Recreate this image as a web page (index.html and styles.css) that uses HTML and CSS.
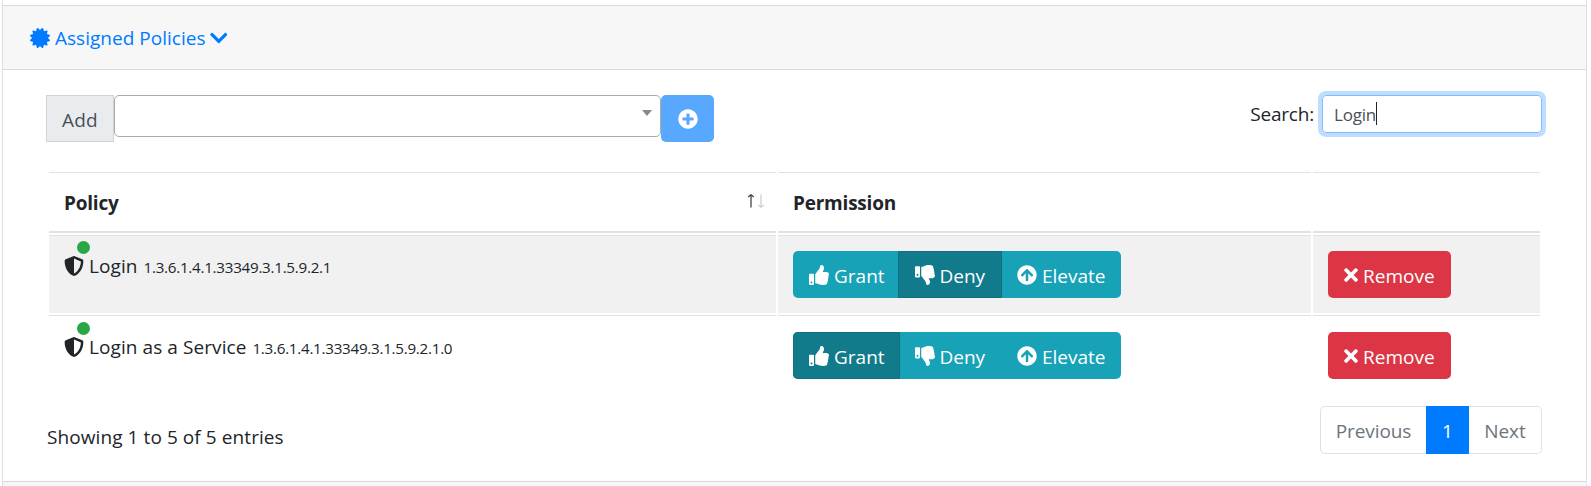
FILE: index.html
```html
<!DOCTYPE html>
<html lang="en">
<head>
<meta charset="utf-8">
<title>Assigned Policies</title>
<link rel="stylesheet" href="styles.css">
</head>
<body>
<svg class="sprite" aria-hidden="true">
  <symbol id="shield" viewBox="0 0 512 512"><path d="M466.5 83.7l-192-80a48.15 48.15 0 0 0-36.9 0l-192 80C27.7 91.1 16 108.6 16 128c0 198.5 114.5 335.7 221.5 380.3 11.8 4.9 25.1 4.9 36.9 0C360.1 472.6 496 349.3 496 128c0-19.4-11.7-36.9-29.5-44.3zM256.1 446.3l-.1-381 175.9 73.3c-3.3 151.4-82.1 261.1-175.8 307.7z"/></symbol>
  <symbol id="times" viewBox="0 0 352 512"><path d="M242.72 256l100.07-100.07c12.28-12.28 12.28-32.19 0-44.48l-22.24-22.24c-12.28-12.28-32.19-12.28-44.48 0L176 189.28 75.93 89.21c-12.28-12.28-32.19-12.28-44.48 0L9.21 111.45c-12.28 12.28-12.28 32.19 0 44.48L109.28 256 9.21 356.07c-12.28 12.28-12.28 32.19 0 44.48l22.24 22.24c12.28 12.28 32.2 12.28 44.48 0L176 322.72l100.07 100.07c12.28 12.28 32.2 12.28 44.48 0l22.24-22.24c12.28-12.28 12.28-32.19 0-44.48L242.72 256z"/></symbol>
  <symbol id="thumbs-up" viewBox="0 0 512 512"><path d="M104 224H24c-13.255 0-24 10.745-24 24v240c0 13.255 10.745 24 24 24h80c13.255 0 24-10.745 24-24V248c0-13.255-10.745-24-24-24zM64 472c-13.255 0-24-10.745-24-24s10.745-24 24-24 24 10.745 24 24-10.745 24-24 24zM384 81.452c0 42.416-25.97 66.208-33.277 94.548h101.723c33.397 0 59.397 27.746 59.553 58.098.084 17.938-7.546 37.249-19.439 49.197l-.11.11c9.836 23.337 8.237 56.037-9.308 79.469 8.681 25.895-.069 57.704-16.382 74.757 4.298 17.598 2.244 32.575-6.148 44.632C440.202 511.587 389.616 512 346.839 512l-2.845-.001c-48.287-.017-87.806-17.598-119.56-31.725-15.957-7.099-36.821-15.887-52.651-16.178-6.54-.12-11.783-5.457-11.783-11.998v-213.77c0-3.2 1.282-6.271 3.558-8.521 39.614-39.144 56.648-80.587 89.117-113.111 14.804-14.832 20.188-37.236 25.393-58.902C282.515 39.293 291.817 0 312 0c24 0 72 8 72 81.452z"/></symbol>
  <symbol id="thumbs-down" viewBox="0 0 512 512"><path d="M0 56v240c0 13.255 10.745 24 24 24h80c13.255 0 24-10.745 24-24V56c0-13.255-10.745-24-24-24H24C10.745 32 0 42.745 0 56zm40 200c0-13.255 10.745-24 24-24s24 10.745 24 24-10.745 24-24 24-24-10.745-24-24zm272 256c-20.183 0-29.485-39.293-33.931-57.795-5.206-21.666-10.589-44.07-25.393-58.902-32.469-32.524-49.503-73.967-89.117-113.111a11.98 11.98 0 0 1-3.558-8.521V59.901c0-6.541 5.243-11.878 11.783-11.998 15.831-.29 36.694-9.079 52.651-16.178C256.189 17.598 295.709.017 343.995 0h2.844c42.777 0 93.363.413 113.774 29.737 8.392 12.057 10.446 27.034 6.148 44.632 16.312 17.053 25.063 48.863 16.382 74.757 17.544 23.432 19.143 56.132 9.308 79.469l.11.11c11.893 11.949 19.523 31.259 19.439 49.197-.156 30.352-26.157 58.098-59.553 58.098H350.723C358.03 364.34 384 388.132 384 430.548 384 504 336 512 312 512z"/></symbol>
  <symbol id="arrow-up" viewBox="0 0 512 512"><path d="M8 256C8 119 119 8 256 8s248 111 248 248-111 248-248 248S8 393 8 256zm143.6 28.9l72.4-75.5V392c0 13.3 10.7 24 24 24h16c13.3 0 24-10.7 24-24V209.4l72.4 75.5c9.3 9.7 24.8 9.9 34.3.4l10.9-11c9.4-9.4 9.4-24.6 0-33.9L273 107.7c-9.4-9.4-24.6-9.4-33.9 0L106.3 240.4c-9.4 9.4-9.4 24.6 0 33.9l10.9 11c9.6 9.5 25.1 9.3 34.4-.4z"/></symbol>
  <symbol id="plus" viewBox="0 0 512 512"><path d="M256 8C119 8 8 119 8 256s111 248 248 248 248-111 248-248S393 8 256 8zm144 276c0 6.6-5.4 12-12 12h-92v92c0 6.6-5.4 12-12 12h-56c-6.6 0-12-5.4-12-12v-92h-92c-6.6 0-12-5.4-12-12v-56c0-6.6 5.4-12 12-12h92v-92c0-6.6 5.4-12 12-12h56c6.6 0 12 5.4 12 12v92h92c6.6 0 12 5.4 12 12v56z"/></symbol>
  <symbol id="chevron" viewBox="0 0 448 512"><path d="M207.029 381.476L12.686 187.132c-9.373-9.373-9.373-24.569 0-33.941l22.667-22.667c9.357-9.357 24.522-9.375 33.901-.04L224 284.505l154.745-154.021c9.379-9.335 24.544-9.317 33.901.04l22.667 22.667c9.373 9.373 9.373 24.569 0 33.941L240.971 381.476c-9.373 9.372-24.569 9.372-33.942 0z"/></symbol>
  <symbol id="certificate" viewBox="0 0 512 512"><path d="M458.622 255.92l45.985-45.005c13.708-12.977 7.316-36.039-10.664-40.339l-62.65-15.99 17.661-62.015c4.991-17.838-11.829-34.663-29.661-29.671l-61.994 17.667-15.984-62.671C337.085.197 313.765-6.276 300.99 7.228L256 53.57 211.011 7.229c-12.63-13.351-36.047-7.234-40.325 10.668l-15.984 62.671-61.995-17.667C74.87 57.907 58.056 74.738 63.046 92.572l17.661 62.015-62.65 15.99C.069 174.878-6.31 197.944 7.392 210.915l45.985 45.005-45.985 45.004c-13.708 12.977-7.316 36.039 10.664 40.339l62.65 15.99-17.661 62.015c-4.991 17.838 11.829 34.663 29.661 29.671l61.994-17.667 15.984 62.671c4.439 18.575 27.696 24.018 40.325 10.668L256 458.61l44.989 46.001c12.5 13.488 35.987 7.486 40.325-10.668l15.984-62.671 61.994 17.667c17.836 4.994 34.651-11.837 29.661-29.671l-17.661-62.015 62.65-15.99c17.987-4.302 24.366-27.367 10.664-40.339l-45.984-45.004z"/></symbol>
</svg>
<main class="accordion">
  <section class="card">
    <header class="card-header">
      <svg class="icon"><use href="#certificate"/></svg>
      <a class="card-title">Assigned Policies</a>
      <svg class="icon icon-chevron"><use href="#chevron"/></svg>
    </header>
    <div class="card-body">
      <div class="toolbar">
        <div class="input-group">
          <span class="group-label">Add</span>
          <div class="select"><svg class="caret" viewBox="0 0 10 6"><path d="M0 0h10L5 6z"/></svg></div>
          <button class="btn btn-add"><svg class="icon"><use href="#plus"/></svg></button>
        </div>
        <label class="search">Search: <span class="search-box"><span class="search-text">Login</span><span class="cursor"></span></span></label>
      </div>
      <table class="table">
        <colgroup><col class="col-policy"><col class="col-permission"><col class="col-action"></colgroup>
        <thead>
          <tr>
            <th><div class="sortable">Policy
              <svg class="sort" viewBox="0 0 18 14"><path class="sort-on" d="M4 13.5V1M1.200 3L4 .8l2.800 2.200"/><path class="sort-off" d="M14 0.500V13M11.200 11L14 13.200l2.800-2.200"/></svg></div></th>
            <th>Permission</th>
            <th></th>
          </tr>
        </thead>
        <tbody>
          <tr class="odd">
            <td><div class="policy"><span class="badge-icon"><svg class="icon"><use href="#shield"/></svg><i class="dot"></i></span><span class="name">Login</span><small>1.3.6.1.4.1.33349.3.1.5.9.2.1</small></div></td>
            <td><div class="btn-group">
              <button class="btn btn-info grant"><svg class="icon"><use href="#thumbs-up"/></svg><span>Grant</span></button><button class="btn btn-info deny active"><svg class="icon"><use href="#thumbs-down"/></svg><span>Deny</span></button><button class="btn btn-info elevate"><svg class="icon"><use href="#arrow-up"/></svg><span>Elevate</span></button>
            </div></td>
            <td><button class="btn btn-danger"><svg class="icon icon-times"><use href="#times"/></svg><span>Remove</span></button></td>
          </tr>
          <tr class="even">
            <td><div class="policy"><span class="badge-icon"><svg class="icon"><use href="#shield"/></svg><i class="dot"></i></span><span class="name">Login as a Service</span><small>1.3.6.1.4.1.33349.3.1.5.9.2.1.0</small></div></td>
            <td><div class="btn-group">
              <button class="btn btn-info grant active"><svg class="icon"><use href="#thumbs-up"/></svg><span>Grant</span></button><button class="btn btn-info deny"><svg class="icon"><use href="#thumbs-down"/></svg><span>Deny</span></button><button class="btn btn-info elevate"><svg class="icon"><use href="#arrow-up"/></svg><span>Elevate</span></button>
            </div></td>
            <td><button class="btn btn-danger"><svg class="icon icon-times"><use href="#times"/></svg><span>Remove</span></button></td>
          </tr>
        </tbody>
      </table>
      <div class="table-footer">
        <div class="info">Showing 1 to 5 of 5 entries</div>
        <nav class="pagination"><span class="page prev">Previous</span><span class="page current">1</span><span class="page next">Next</span></nav>
      </div>
    </div>
  </section>
  <section class="card card-next"></section>
</main>
</body>
</html>
```
FILE: styles.css
```css
* { box-sizing: border-box; }

body {
  margin: 0;
  height: 486px;
  overflow: hidden;
  background: #fff;
  color: #212529;
  font-family: "Open Sans", "Noto Sans", sans-serif;
  font-size: 19px;
  line-height: 30px;
}

.sprite { display: none; }

.icon {
  display: block;
  flex: none;
  width: 20px;
  height: 20px;
  fill: currentColor;
}

.accordion {
  margin: 0 4px 0 2px;
  height: 486px;
  border: solid #dfdfdf;
  border-width: 0 1px;
}

.card { padding-top: 5px; }

.card-header {
  display: flex;
  align-items: center;
  height: 65px;
  padding: 0 26px 0 26.500px;
  border: solid #d9d9d9;
  border-width: 1px 0;
  background: #f7f7f7;
  color: #007bff;
}

.card-title {
  margin: 0 4px 0 5.500px;
  letter-spacing: 0.020px;
}

.icon-chevron { width: 17.500px; }

.card-body {
  height: 411px;
  padding: 25px 44px 0 43px;
}

.toolbar {
  display: flex;
  justify-content: space-between;
  align-items: flex-start;
  height: 77px;
}

.input-group {
  display: flex;
  align-items: flex-start;
}

.group-label {
  width: 68px;
  height: 47px;
  padding-top: 10px;
  border: 1px solid #ced4da;
  background: #e9ecef;
  color: #495057;
  line-height: 29px;
  letter-spacing: 0.200px;
  text-align: center;
}

.select {
  display: flex;
  justify-content: flex-end;
  width: 547px;
  height: 42px;
  padding: 14px 8px 0 0;
  border: 1px solid #aaa;
  border-radius: 5px;
}

.caret {
  width: 10px;
  height: 6px;
  fill: #888;
}

.btn {
  display: flex;
  align-items: center;
  height: 47px;
  padding: 1px 0 0 16px;
  border: 0;
  border-radius: 5px;
  color: #fff;
  font: inherit;
}

.btn span { padding-top: 2px; }

.btn-add {
  width: 53px;
  padding: 0 0 0 16.500px;
  background: #59a8ff;
}

.search {
  display: flex;
  align-items: center;
  height: 38px;
  letter-spacing: -0.200px;
}

.search-box {
  display: flex;
  align-items: center;
  width: 220px;
  height: 38px;
  margin-left: 8px;
  padding: 2px 0 0 11px;
  border: 1px solid #80bdff;
  border-radius: 4px;
  box-shadow: 0 0 0 4px #bfdeff;
  color: #495057;
  font-size: 17px;
}

.cursor {
  width: 1px;
  height: 23px;
  margin-top: -3px;
  background: #212529;
}

.table {
  width: 1495px;
  margin: -2px 0 0 1px;
  border-collapse: separate;
  border-spacing: 2px;
  table-layout: fixed;
}

.col-policy { width: 727px; }
.col-permission { width: 533px; }
.col-action { width: 227px; }

th, td {
  padding: 15px;
  border-top: 1px solid #dee2e6;
  text-align: left;
  vertical-align: top;
}

th {
  height: 61px;
  padding: 15px 15px 0;
  border-bottom: 2px solid #dee2e6;
  letter-spacing: -0.220px;
}

td { height: 78px; padding-bottom: 0; }

.odd td { background: #f1f1f1; }
.even td { padding-top: 16px; }

.sortable {
  display: flex;
  justify-content: space-between;
}

.sort {
  width: 18px;
  height: 14px;
  margin: 6px -4px 0 0;
  fill: none;
  stroke: #3f454b;
  stroke-width: 1.300;
}

.sort-off { stroke: #cfcfcf; }

.policy {
  display: flex;
  align-items: baseline;
}

.badge-icon {
  position: relative;
  align-self: flex-start;
  margin: 4.500px 0 0 -0.500px;
}

.dot {
  position: absolute;
  left: 13px;
  top: -15px;
  width: 13px;
  height: 13px;
  border-radius: 50%;
  background: #28a745;
}

.name {
  margin: 0 6px 0 5.500px;
  letter-spacing: 0.080px;
}

small {
  font-size: 15.200px;
  letter-spacing: -0.270px;
}

.btn-group { display: flex; }

.btn-info {
  border-radius: 0;
  background: #17a2b8;
}

.btn-info.active {
  background: #117a8b;
  box-shadow: inset 0 0 0 1px #10707f;
}

.btn .icon { margin-right: 5px; }

.grant { width: 105px; border-radius: 5px 0 0 5px; }
.grant.active { width: 107px; }
.deny { width: 104px; padding-left: 16.500px; }
.grant.active + .deny { width: 102px; padding-left: 14.500px; }
.elevate { width: 119px; padding-left: 15px; border-radius: 0 5px 5px 0; }

.btn-danger {
  width: 123px;
  background: #dc3545;
}

.btn .icon-times { width: 14px; }

.table-footer {
  display: flex;
  justify-content: space-between;
  margin-top: 11px;
}

.info {
  padding: 16px 0 0 1px;
  letter-spacing: 0.080px;
}

.pagination { display: flex; }

.page {
  height: 48px;
  padding-top: 9px;
  border: 1px solid #dee2e6;
  color: #6c757d;
  letter-spacing: -0.100px;
  text-align: center;
}

.prev { width: 106px; border-right: 0; border-radius: 5px 0 0 5px; }
.current { width: 43px; border-color: #007bff; background: #007bff; color: #fff; }
.next { width: 73px; border-left: 0; border-radius: 0 5px 5px 0; }

.card-next {
  height: 5px;
  border-top: 1px solid #d9d9d9;
  background: #f7f7f7;
}
```
